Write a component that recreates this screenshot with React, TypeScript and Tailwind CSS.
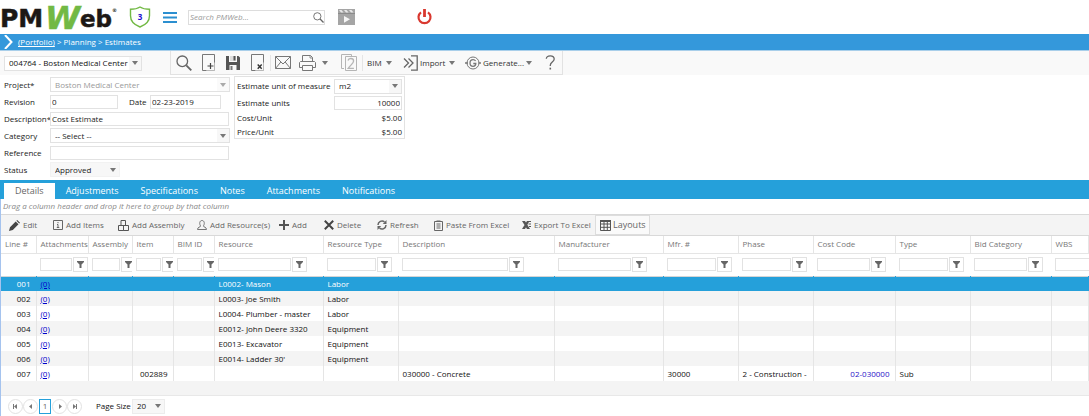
import React from 'react';

const columns = [
  { title: 'Line #', width: 'w-[35px]', input: '' },
  { title: 'Attachments', width: 'w-[52px]', input: 'w-8' },
  { title: 'Assembly', width: 'w-11', input: 'w-7' },
  { title: 'Item', width: 'w-[41px]', input: 'w-[25px]' },
  { title: 'BIM ID', width: 'w-[41px]', input: 'w-[25px]' },
  { title: 'Resource', width: 'w-[109px]', input: 'w-[73px]' },
  { title: 'Resource Type', width: 'w-[75px]', input: 'w-[49px]' },
  { title: 'Description', width: 'w-[156px]', input: 'w-[106px]' },
  { title: 'Manufacturer', width: 'w-[109px]', input: 'w-[73px]' },
  { title: 'Mfr. #', width: 'w-[75px]', input: 'w-[49px]' },
  { title: 'Phase', width: 'w-[75px]', input: 'w-[49px]' },
  { title: 'Cost Code', width: 'w-[82px]', input: 'w-[53px]' },
  { title: 'Type', width: 'w-[75px]', input: 'w-[49px]' },
  { title: 'Bid Category', width: 'w-[81px]', input: 'w-[53px]' },
  { title: 'WBS', width: '', input: 'w-[49px]' },
];

const rows = [
  { line: '001', resource: 'L0002- Mason', resourceType: 'Labor' },
  { line: '002', resource: 'L0003- Joe Smith', resourceType: 'Labor' },
  { line: '003', resource: 'L0004- Plumber - master', resourceType: 'Labor' },
  { line: '004', resource: 'E0012- John Deere 3320', resourceType: 'Equipment' },
  { line: '005', resource: 'E0013- Excavator', resourceType: 'Equipment' },
  { line: '006', resource: "E0014- Ladder 30'", resourceType: 'Equipment' },
  {
    line: '007',
    item: '002889',
    description: '030000 - Concrete',
    mfr: '30000',
    phase: '2 - Construction -',
    costCode: '02-030000',
    type: 'Sub',
  },
];

const tabs = ['Details', 'Adjustments', 'Specifications', 'Notes', 'Attachments', 'Notifications'];

const Caret = ({ className = '' }: { className?: string }) => (
  <svg width="6" height="4" viewBox="0 0 6 4" className={`shrink-0 ${className}`}>
    <path d="M0 0h6L3 4z" fill="currentColor" />
  </svg>
);

type SelectProps = {
  id: string;
  value: string;
  className: string;
  arrow?: string;
  label?: string;
  disabled?: boolean;
};

const Select = ({ id, value, className, arrow = 'bg-[#f7f7f7] text-[#777]', label, disabled }: SelectProps) => (
  <div className={`grid h-[15px] grid-cols-[1fr_12px] border ${className}`}>
    <select
      id={id}
      aria-label={label}
      disabled={disabled}
      className="col-span-2 col-start-1 row-start-1 h-full w-full appearance-none bg-transparent pl-1 leading-3 outline-none disabled:text-[#999] disabled:opacity-100"
    >
      <option>{value}</option>
    </select>
    <span className={`pointer-events-none col-start-2 row-start-1 flex items-center justify-center ${arrow}`}>
      <Caret />
    </span>
  </div>
);

const Logo = () => (
  <svg width="116" height="34" viewBox="0 0 116 34" role="img" aria-label="PMWeb" className="shrink-0 overflow-visible">
    <g fontFamily="DejaVu Sans" fontWeight="bold">
      <text x="0" y="27" fontSize="25" fill="#1d1815" stroke="#1d1815" strokeWidth="0.5">PM</text>
      <text x="80" y="27" fontSize="23" fill="#1d1815" stroke="#1d1815" strokeWidth="0.5">eb</text>
      <text x="45" y="29" fontSize="32" fontStyle="italic" fill="#72b944" stroke="#72b944" strokeWidth="0.5">W</text>
      <text x="112" y="12" fontSize="5" fill="#1d1815">®</text>
    </g>
  </svg>
);

const SearchIcon = ({ size }: { size: number }) => (
  <svg width={size} height={size} viewBox="0 0 16 16" fill="none" stroke="#666">
    <circle cx="6.3" cy="6.3" r="5.3" strokeWidth="1.3" />
    <path d="M10.3 10.3l5 5" strokeWidth="1.9" />
  </svg>
);

const FileIcon = ({ mark }: { mark: 'plus' | 'cross' }) => (
  <svg width="14" height="17" viewBox="0 0 14 17" fill="none" stroke="#777">
    <path d="M4.5 16.5h-4V.5h12v8" />
    <path d="M12.5 8v8.5h-8" strokeOpacity=".5" />
    {mark === 'plus' ? (
      <path d="M8.5 9v6M5.5 12h6" stroke="#444" strokeWidth="1.2" />
    ) : (
      <path d="M6.7 10.5l4 4.3M10.7 10.5l-4 4.3" stroke="#333" strokeWidth="1.4" />
    )}
  </svg>
);

const SaveIcon = () => (
  <svg width="14" height="14" viewBox="0 0 14 14">
    <path d="M0 0h3v6h8V0h1.5L14 1.5V14H0z" fill="#555" />
    <path d="M4 0h6v5H4z" fill="#ddd" />
    <path d="M7.5 0h2v4.5h-2z" fill="#555" />
    <path d="M3.5 9h7v5h-7z" fill="#f9f9f9" />
    <path d="M4.5 10h2v4h-2z" fill="#777" />
  </svg>
);

const MailIcon = () => (
  <svg width="16" height="13" viewBox="0 0 16 13" fill="none" stroke="#777">
    <path d="M.5.5h15v12H.5zM.5.5L8 8 15.5.5M.5 12.5L5.8 6M15.5 12.5L10.2 6" />
  </svg>
);

const PrintIcon = () => (
  <svg width="17" height="16" viewBox="0 0 17 16" fill="none" stroke="#777">
    <path d="M3.5 6.5v-6h8l2 2v4M1.5 6.5h14l1 1v5h-3M3.5 12.5h-3v-5l1-1M3.5 10.5h10v5h-10z" />
    <path d="M11 .5V3h2.5" strokeWidth=".8" />
  </svg>
);

const CopyIcon = () => (
  <svg width="16" height="17" viewBox="0 0 16 17" fill="none" stroke="#b5b5b5">
    <path d="M3 14.5H.5V.5h10v2M4.5 2.5h11v14h-11z" />
    <path d="M7 6.5c.3-1.3 1.3-2 2.8-2 1.7 0 2.8 1 2.8 2.5 0 2.3-3 4-5.4 7.3h5.7" strokeWidth="1.3" />
  </svg>
);

const ImportIcon = () => (
  <svg width="15" height="16" viewBox="0 0 15 16" fill="none" stroke="#666" strokeWidth="1.3">
    <path d="M1 3.5L5.5 8 1 12.5M5.5 3.5L10 8l-4.5 4.5" />
    <path d="M8 .8h6.2v14.4H8" />
  </svg>
);

const GenerateIcon = () => (
  <svg width="16" height="14" viewBox="0 0 16 14" fill="none" stroke="#777">
    <circle cx="8" cy="7" r="6" />
    <path d="M10.6 5c-.6-.9-1.5-1.3-2.5-1.3C6.3 3.7 5 5.1 5 7s1.3 3.3 3.1 3.3c1.6 0 2.7-1 2.7-2.8H8.3" strokeWidth="1.3" />
    <path d="M0 7h3M13.5 7H16" strokeWidth="1.4" />
  </svg>
);

const HelpIcon = () => (
  <svg width="11" height="15" viewBox="0 0 11 15" fill="none" stroke="#666">
    <path d="M1.3 3.8C1.5 1.9 3 .8 5.2.8c2.4 0 4 1.2 4 3.2 0 3-3.9 3.2-3.9 6.3v.7" strokeWidth="1.3" />
    <path d="M5.3 12.7v1.8" strokeWidth="1.6" />
  </svg>
);

const gridActions = [
  {
    label: 'Edit',
    width: 'w-11',
    icon: (
      <svg width="11" height="11" viewBox="0 0 11 11" fill="#444">
        <path d="M0 11l1-3.8 5.7-5.7 2.8 2.8L3.8 10zM7.4.8L8.2 0 11 2.8l-.8.8z" />
      </svg>
    ),
  },
  {
    label: 'Add Items',
    width: 'w-[65px]',
    icon: (
      <svg width="10" height="10" viewBox="0 0 10 10" fill="none" stroke="#666">
        <path d="M.5.5h9v9h-9z" />
        <path d="M5 2v1.2M4 4.5h1v3M3.8 7.5h2.5" />
      </svg>
    ),
  },
  {
    label: 'Add Assembly',
    width: 'w-[79px]',
    icon: (
      <svg width="11" height="11" viewBox="0 0 11 11" fill="none" stroke="#555">
        <path d="M3 .5h4.5v5H3zM.5 5.5h5v5h-5zM5.5 5.5h5v5h-5z" />
      </svg>
    ),
  },
  {
    label: 'Add Resource(s)',
    width: 'w-[82px]',
    icon: (
      <svg width="10" height="10" viewBox="0 0 10 10" fill="none" stroke="#777">
        <path d="M3.7 6C2 4 2.5.5 5 .5S8 4 6.3 6c.2 1.3 3.2.8 3.2 3.5h-9C.5 6.8 3.5 7.3 3.7 6z" />
      </svg>
    ),
  },
  {
    label: 'Add',
    width: 'w-[45px]',
    icon: (
      <svg width="10" height="10" viewBox="0 0 10 10" stroke="#555" strokeWidth="2">
        <path d="M5 0v10M0 5h10" />
      </svg>
    ),
  },
  {
    label: 'Delete',
    width: 'w-[53px]',
    icon: (
      <svg width="10" height="10" viewBox="0 0 10 10" stroke="#444" strokeWidth="2">
        <path d="M.8.8l8.4 8.4M9.2.8L.8 9.2" />
      </svg>
    ),
  },
  {
    label: 'Refresh',
    width: 'w-[57px]',
    icon: (
      <svg width="10" height="10" viewBox="0 0 10 10" fill="none" stroke="#666" strokeWidth="1.5">
        <path d="M1 5a4 4 0 0 1 6.5-3.1M9 5a4 4 0 0 1-6.5 3.1" />
        <path d="M9.5 0v4H5.8zM.5 10V6h3.7z" fill="#666" stroke="none" />
      </svg>
    ),
  },
  {
    label: 'Paste From Excel',
    width: 'w-[88px]',
    icon: (
      <svg width="9" height="11" viewBox="0 0 9 11" fill="none" stroke="#666">
        <path d="M.5 1.5h8v9h-8z" />
        <path d="M2.5 1h4M2.5 4h4M2.5 6h4M2.5 8h4" />
      </svg>
    ),
  },
  {
    label: 'Export To Excel',
    width: 'w-[73px]',
    icon: (
      <svg width="9" height="8" viewBox="0 0 9 8" fill="#555">
        <path d="M0 0h3l5 8H5zM5 0h2.5L3 8H0z" />
        <path d="M6 0h3v1H6zM6.5 2.5H9v1H6.5zM7 5h2v1H7z" />
      </svg>
    ),
  },
];

const FilterIcon = () => (
  <svg width="7" height="7" viewBox="0 0 7 7" fill="#666">
    <path d="M0 0h7v1L4.5 3.5V7h-2V3.5L0 1z" />
  </svg>
);

const Header = () => (
  <header className="flex h-[34px] items-center">
    <Logo />
    <a href="#notifications" className="ml-[13px] grid shrink-0 place-items-center text-[8px] font-bold text-[#1a0dd0]">
      <svg width="22" height="22" viewBox="0 0 22 22" className="col-start-1 row-start-1">
        <path
          d="M11 1C8 3 4.5 3.3 1.5 3.3v6.5C1.5 15 5 18.8 11 21c6-2.2 9.5-6 9.5-11.2V3.3C17.5 3.3 14 3 11 1z"
          fill="none"
          stroke="#72b944"
          strokeWidth="1.4"
        />
      </svg>
      <span className="col-start-1 row-start-1">3</span>
    </a>
    <button aria-label="Menu" className="ml-3 shrink-0">
      <svg width="14" height="11" viewBox="0 0 14 11" fill="#2b8fd0">
        <path d="M0 0h14v2H0zM0 4.5h14v2H0zM0 9h14v2H0z" />
      </svg>
    </button>
    <form className="ml-[11px] flex h-[15px] w-[137px] shrink-0 items-center border border-[#ddd]">
      <input
        aria-label="Search PMWeb"
        placeholder="Search PMWeb..."
        className="min-w-0 flex-1 pl-px italic outline-none placeholder:text-[#999]"
      />
      <button aria-label="Search">
        <SearchIcon size={11} />
      </button>
    </form>
    <button aria-label="Videos" className="ml-[13px] shrink-0">
      <svg width="17" height="16" viewBox="0 0 17 16">
        <path d="M0 0h17v16H0z" fill="#a5a5a5" />
        <path d="M1 1l2 2.5h2.5L3.5 1zM6 1l2 2.5h2.5L8.500 1zM11 1l2 2.5h2.5L13.5 1z" fill="#e8e8e8" />
        <path d="M0 4.5h17" stroke="#8a8a8a" />
        <path d="M6 7l6 3.3-6 3.5z" fill="#f5f5f5" />
      </svg>
    </button>
    <button aria-label="Log out" className="ml-[62px] shrink-0">
      <svg width="15" height="16" viewBox="0 0 15 16" fill="none" stroke="#d9382f">
        <path d="M4 3.3a6 6 0 1 0 7 0" strokeWidth="2.2" />
        <path d="M7.5 0v8" strokeWidth="2.8" />
      </svg>
    </button>
  </header>
);

const Toolbar = () => (
  <div className="flex h-[25px] items-center border-t border-[#a9cfea] bg-[#f9f9f9]">
    <Select
      id="record"
      label="Record"
      value="004764 - Boston Medical Center"
      className="ml-1 w-[138px] shrink-0 border-[#e2e2e2] bg-white"
    />
    <div className="ml-7 flex h-full w-[393px] shrink-0 items-center border border-t-0 border-[#e2e2e2] text-[#333]">
      <button aria-label="Find" className="w-[31px] pl-[5px]"><SearchIcon size={16} /></button>
      <button aria-label="New" className="w-6"><FileIcon mark="plus" /></button>
      <button aria-label="Save" className="w-[25px]"><SaveIcon /></button>
      <button aria-label="Delete record" className="w-[19px]"><FileIcon mark="cross" /></button>
      <span className="h-4 w-px bg-[#e5e5e5]" />
      <button aria-label="Email" className="ml-1 w-6"><MailIcon /></button>
      <button aria-label="Print" className="flex w-[42px] items-center gap-1.5">
        <PrintIcon />
        <Caret className="text-[#777]" />
      </button>
      <button aria-label="Copy" className="w-[21px]"><CopyIcon /></button>
      <span className="h-4 w-px bg-[#e5e5e5]" />
      <button className="ml-1 flex w-9 items-center gap-1">BIM <Caret className="text-[#777]" /></button>
      <button className="flex w-[62px] items-center gap-0.5">
        <ImportIcon /> Import <Caret className="ml-0.5 text-[#777]" />
      </button>
      <button className="flex w-20 items-center gap-0.5">
        <GenerateIcon /> Generate... <Caret className="text-[#777]" />
      </button>
      <button aria-label="Help"><HelpIcon /></button>
    </div>
  </div>
);

const fieldClass = 'h-3.5 min-w-0 border border-[#e2e2e2] bg-white px-px outline-none';

const DetailsForm = () => (
  <form className="flex items-start gap-1 pb-0.5 pl-1 pt-px text-[#222]">
    <div className="grid w-[226px] shrink-0 auto-rows-[17px] grid-cols-[46px_1fr] items-center">
      <label htmlFor="project">Project*</label>
      <Select
        id="project"
        value="Boston Medical Center"
        className="w-full border-[#e2e2e2]"
        arrow="bg-[#fafafa] text-[#aaa]"
        disabled
      />
      <label htmlFor="revision">Revision</label>
      <div className="flex items-center">
        <input id="revision" defaultValue="0" className={`${fieldClass} w-[68px]`} />
        <label htmlFor="date" className="ml-[11px] w-[21px]">Date</label>
        <input id="date" defaultValue="02-23-2019" className={`${fieldClass} w-[71px]`} />
      </div>
      <label htmlFor="description">Description*</label>
      <input id="description" defaultValue="Cost Estimate" className={`${fieldClass} mr-px`} />
      <label htmlFor="category">Category</label>
      <Select id="category" value="-- Select --" className="w-full border-[#e2e2e2]" />
      <label htmlFor="reference">Reference</label>
      <input id="reference" className={`${fieldClass} mr-px`} />
      <label htmlFor="status">Status</label>
      <Select id="status" value="Approved" className="w-[70px] border-[#f2f2f2] bg-[#f7f7f7]" />
    </div>
    <div className="grid w-[171px] shrink-0 grid-cols-[95px_1fr] grid-rows-[18px_15px_15px_13px] items-center border border-[#e2e2e2] px-0.5">
      <label htmlFor="measure" className="whitespace-nowrap">Estimate unit of measure</label>
      <Select id="measure" value="m2" className="ml-0.5 border-[#e2e2e2]" />
      <label htmlFor="units">Estimate units</label>
      <input id="units" defaultValue="10000" className={`${fieldClass} ml-0.5 text-right`} />
      <span>Cost/Unit</span>
      <span className="text-right">$5.00</span>
      <span>Price/Unit</span>
      <span className="text-right">$5.00</span>
    </div>
  </form>
);

const EstimateTable = () => (
  <table className="w-full table-fixed border-collapse text-left">
    <colgroup>
      {columns.map((col) => (
        <col key={col.title} className={col.width} />
      ))}
    </colgroup>
    <thead>
      <tr className="h-[17px] border-b border-[#e5e5e5] text-[#777]">
        {columns.map((col) => (
          <th key={col.title} className="overflow-hidden whitespace-nowrap border-r border-[#e5e5e5] p-0 pl-1 font-normal">
            {col.title}
          </th>
        ))}
      </tr>
      <tr className="h-[23px] border-b border-[#d5d5d5]">
        {columns.map((col) => (
          <td key={col.title} className="overflow-hidden p-0 pb-px pl-1">
            {col.input && (
              <div className="flex items-center gap-px">
                <input
                  aria-label={`Filter ${col.title}`}
                  className={`h-[13px] shrink-0 border border-[#e2e2e2] outline-none ${col.input}`}
                />
                <button
                  aria-label={`Apply ${col.title} filter`}
                  className="flex h-[15px] w-[15px] shrink-0 items-center justify-center border border-[#e2e2e2]"
                >
                  <FilterIcon />
                </button>
              </div>
            )}
          </td>
        ))}
      </tr>
    </thead>
    <tbody className="[&_td]:overflow-hidden [&_td]:whitespace-nowrap [&_td]:border-r [&_td]:border-[#e5e5e5] [&_td]:p-0 [&_td]:pl-1 [&_td]:pr-[5px]">
      {rows.map((row, i) => {
        const tone = i === 0 ? 'bg-[#25a0da] text-white [&_td]:border-[#25a0da]!' : i % 2 ? 'bg-[#f4f4f4]' : 'bg-white';
        return (
          <tr key={row.line} className={`h-[15px] ${tone}`}>
            <td className="text-right">{row.line}</td>
            <td>
              <a href="#attachments" className="text-[#0000cc] underline">(0)</a>
            </td>
            <td />
            <td className="text-right">{row.item}</td>
            <td />
            <td>{row.resource}</td>
            <td>{row.resourceType}</td>
            <td>{row.description}</td>
            <td />
            <td>{row.mfr}</td>
            <td>{row.phase}</td>
            <td className="text-right">
              {row.costCode && <a href="#cost-code" className="text-[#2a10c8]">{row.costCode}</a>}
            </td>
            <td>{row.type}</td>
            <td />
            <td />
          </tr>
        );
      })}
    </tbody>
  </table>
);

const pagerButton = 'flex size-[15px] items-center justify-center rounded-full border border-[#e2e2e2] text-[#777]';

const Pager = () => (
  <div className="flex h-[21px] items-center border-t border-[#e8e8e8] pl-[7px]">
    <button aria-label="First page" className={pagerButton}>
      <svg width="5" height="5" viewBox="0 0 5 5" fill="currentColor"><path d="M0 0h1v5H0zM4 0v5L1 2.5z" /></svg>
    </button>
    <button aria-label="Previous page" className={pagerButton}>
      <svg width="4" height="5" viewBox="0 0 4 5" fill="currentColor"><path d="M3 0v5L0 2.5z" /></svg>
    </button>
    <button className="mx-px h-[15px] w-3 border border-[#25a0da] text-[#666]">1</button>
    <button aria-label="Next page" className={pagerButton}>
      <svg width="4" height="5" viewBox="0 0 4 5" fill="currentColor"><path d="M1 0v5l3-2.5z" /></svg>
    </button>
    <button aria-label="Last page" className={pagerButton}>
      <svg width="5" height="5" viewBox="0 0 5 5" fill="currentColor"><path d="M4 0h1v5H4zM1 0v5l3-2.5z" /></svg>
    </button>
    <label htmlFor="page-size" className="ml-3.5 w-9 whitespace-nowrap">Page Size</label>
    <Select id="page-size" value="20" className="w-[33px] border-[#ececec] bg-[#f7f7f7]" />
  </div>
);

const App = () => {
  return (
    <div className="overflow-hidden bg-white font-['Open_Sans',sans-serif] text-[8px] leading-3 text-[#111]">
      <Header />
      <nav className="flex h-4 items-center gap-1 bg-[#3498db] pl-1 text-white">
        <svg width="9" height="14" viewBox="0 0 9 14" fill="none" stroke="white" strokeWidth="2">
          <path d="M1 0l6.5 7L1 14" />
        </svg>
        <span className="pl-px">
          <a href="#portfolio" className="underline">(Portfolio)</a> &gt; Planning &gt; Estimates
        </span>
      </nav>
      <Toolbar />
      <DetailsForm />
      <div role="tablist" className="flex h-[19px] items-end bg-[#25a0da] pl-1 text-[9px] text-white">
        {tabs.map((tab, i) => (
          <button
            key={tab}
            role="tab"
            aria-selected={i === 0}
            className={`h-4 px-[11px] ${i === 0 ? 'bg-white text-[#666]' : ''}`}
          >
            {tab}
          </button>
        ))}
      </div>
      <main className="border-l border-[#a5c3ee]">
        <p className="h-[15px] pl-0.5 pt-px italic text-[#888]">
          Drag a column header and drop it here to group by that column
        </p>
        <div className="flex h-[22px] items-center border-y border-[#d9d9d9] bg-[#f4f4f4] pl-2 text-[#666]">
          {gridActions.map((action) => (
            <button key={action.label} className={`flex shrink-0 items-center gap-[3px] whitespace-nowrap ${action.width}`}>
              {action.icon}
              {action.label}
            </button>
          ))}
          <button className="flex h-5 w-[55px] shrink-0 items-center gap-0.5 border border-[#ddd] bg-[#fafafa] pl-1 text-[9px]">
            <svg width="11" height="11" viewBox="0 0 11 11" fill="none" stroke="#555">
              <path d="M.5.5h10v10H.5zM.5 4h10M.5 7.3h10M4 2v8.5M7.3 2v8.5" />
              <path d="M0 1h11" strokeWidth="2" />
            </svg>
            Layouts
          </button>
        </div>
        <EstimateTable />
        <div className="h-3.5 bg-[#f4f4f4]" />
        <Pager />
      </main>
    </div>
  );
};

export default App;
